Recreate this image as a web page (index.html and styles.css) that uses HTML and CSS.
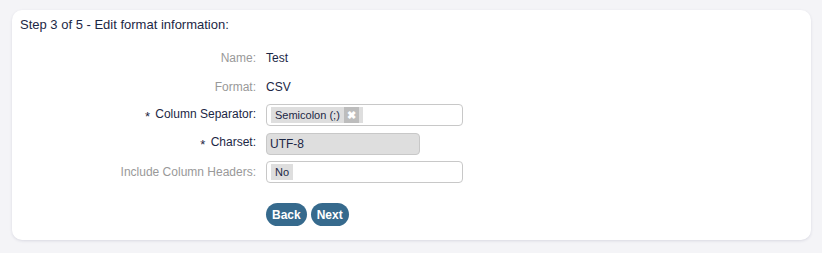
FILE: index.html
```html
<!DOCTYPE html>
<html lang="en">
<head>
  <meta charset="UTF-8">
  <title>Edit format information</title>
  <link rel="stylesheet" href="styles.css">
</head>
<body>
  <div class="page">
    <div class="card">
      <h2 class="card-title">Step 3 of 5 - Edit format information:</h2>

      <div class="form">
        <div class="form-row">
          <label class="form-label">Name:</label>
          <div class="form-value">Test</div>
        </div>
        <div class="form-row">
          <label class="form-label">Format:</label>
          <div class="form-value">CSV</div>
        </div>
        <div class="form-row">
          <label class="form-label required"><span class="star">*</span> Column Separator:</label>
          <div class="select wide">
            <span class="tag">Semicolon (;)<span class="tag-remove">&#10006;</span></span>
          </div>
        </div>
        <div class="form-row">
          <label class="form-label required"><span class="star">*</span> Charset:</label>
          <div class="select narrow disabled">UTF-8</div>
        </div>
        <div class="form-row">
          <label class="form-label">Include Column Headers:</label>
          <div class="select wide">
            <span class="tag">No</span>
          </div>
        </div>

        <div class="form-actions">
          <button class="btn">Back</button>
          <button class="btn">Next</button>
        </div>
      </div>
    </div>
  </div>
</body>
</html>
```

FILE: styles.css
```css
* {
  margin: 0;
  padding: 0;
  box-sizing: border-box;
  font-family: "Liberation Sans", Arial, sans-serif;
}

body {
  background-color: #f4f4f7;
}

.page {
  padding: 10px 11px 13px 12px;
}

.card {
  height: 230px;
  background-color: #fff;
  border-radius: 10px;
  box-shadow: 0 1px 3px rgba(30, 30, 80, 0.12);
  padding: 7px 8px 14px 8px;
}

.card-title {
  font-size: 13px;
  font-weight: normal;
  line-height: 16px;
  color: #1c2745;
}

.form {
  margin-top: 14px;
  display: flex;
  flex-direction: column;
  gap: 6.5px;
}

.form-row {
  display: grid;
  grid-template-columns: 236px 1fr;
  column-gap: 10px;
  align-items: center;
  height: 22px;
  font-size: 12px;
}

.form-label {
  text-align: right;
  color: #999;
}

.form-label.required {
  color: #1c2745;
}

.star {
  display: inline-block;
  font-size: 13px;
  vertical-align: -3px;
  margin-right: 2px;
}

.form-value {
  color: #1c2745;
}

.select {
  height: 22px;
  border: 1px solid #c8c8c8;
  border-radius: 4px;
  display: flex;
  align-items: center;
  padding: 0 4px;
  color: #1c2745;
}

.select.wide {
  width: 197px;
}

.select.narrow {
  width: 154px;
}

.select.disabled {
  background-color: #dedede;
  padding-left: 3px;
}

.tag {
  display: inline-flex;
  align-items: center;
  height: 16px;
  padding-left: 4px;
  background-color: #dedede;
  font-size: 11px;
  line-height: 16px;
}

.tag:last-child {
  padding-right: 4px;
}

.tag-remove {
  display: inline-block;
  margin-left: 4px;
  width: 15px;
  height: 16px;
  background-color: #bdbdbd;
  color: #fff;
  font-size: 11px;
  font-weight: bold;
  text-align: center;
  line-height: 16px;
}

.form-actions {
  margin-top: 13.5px;
  padding-left: 246px;
  display: flex;
  gap: 4px;
}

.btn {
  height: 23px;
  padding: 0 6px;
  border: none;
  border-radius: 12px;
  background-color: #366a8d;
  color: #fff;
  font-size: 12px;
  font-weight: bold;
  cursor: pointer;
}
```
